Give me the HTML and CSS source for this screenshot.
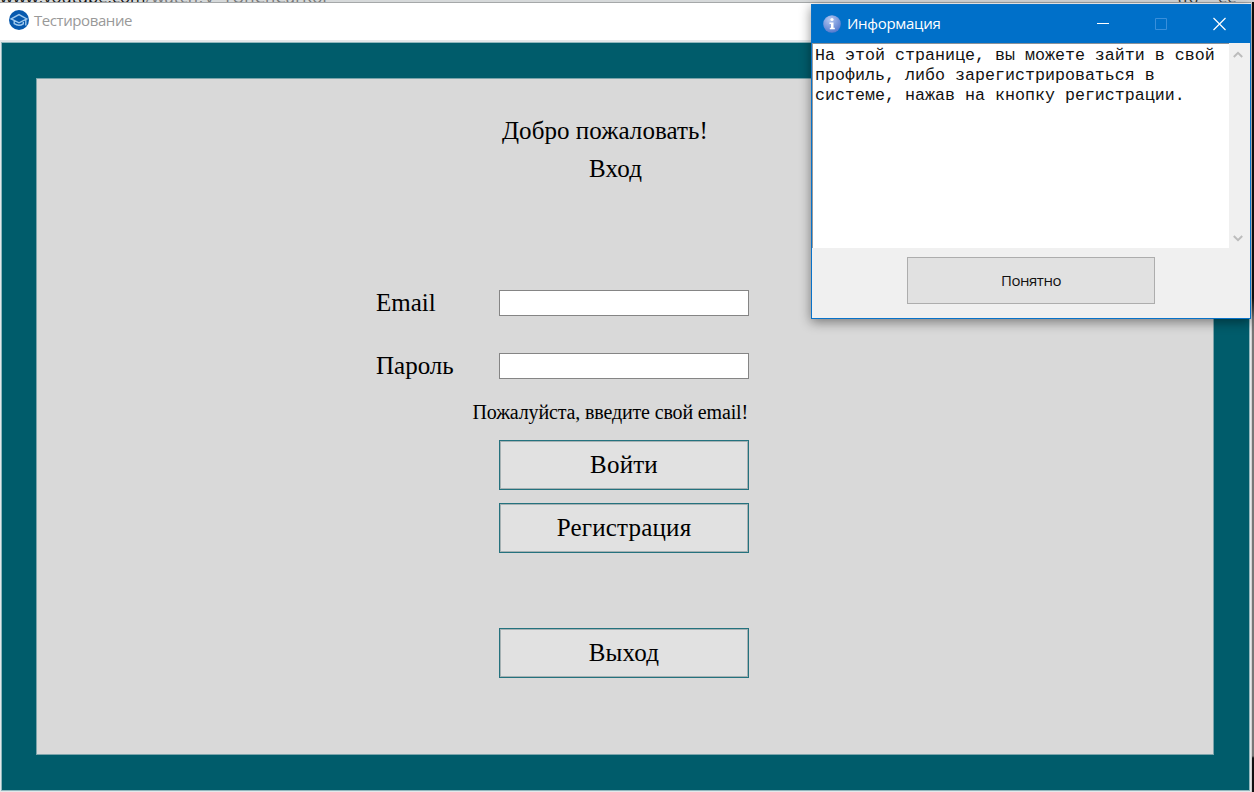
FILE: index.html
```html
<!DOCTYPE html>
<html lang="ru">
<head>
<meta charset="utf-8">
<title>Тестирование</title>
<link rel="stylesheet" href="styles.css">
</head>
<body>
<div class="desktop">
  <div class="address"><span><b>www.youtube.com</b>/watch?v=TUnCnCarKoI</span><span class="address-tools">(R)</span><span class="address-more">ee</span></div>
  <main class="window">
    <header class="titlebar">
      <svg class="app-icon" viewBox="0 0 20 20"><circle cx="10" cy="10" r="10" fill="#0759ae"/><path d="M2.2 8.9 10 4.6l7.8 4.3-7.8 3.9zM5.2 10.5v3.2q4.7 3 9.1.1v-3.2M16.8 9.2v6.3" fill="none" stroke="#9fc9ee" stroke-width="1.4"/></svg>
      <span class="app-title">Тестирование</span>
    </header>
    <div class="frame">
      <section class="panel">
        <h1 class="welcome"><span>Добро пожаловать!</span></h1>
        <h2 class="subtitle"><span>Вход</span></h2>
        <form class="form">
          <div class="field"><label for="email">Email</label><input id="email" type="text"></div>
          <div class="field"><label for="password">Пароль</label><input id="password" type="password"></div>
          <p class="message"><span>Пожалуйста, введите свой email!</span></p>
          <button class="action" type="button">Войти</button>
          <button class="action" type="button">Регистрация</button>
          <button class="action exit" type="button">Выход</button>
        </form>
      </section>
    </div>
  </main>
  <aside class="edge"></aside>
</div>
<div class="dialog" role="dialog">
  <header class="dialog-bar">
    <svg class="info-icon" viewBox="0 0 18 18"><defs><radialGradient id="ball" cx=".4" cy=".25" r=".8"><stop offset="0" stop-color="#b4c9f2"/><stop offset="1" stop-color="#4f75cc"/></radialGradient></defs><circle cx="9" cy="9" r="8.8" fill="url(#ball)"/><circle cx="9" cy="4.5" r="1.6" fill="#fff"/><path d="M6.5 7.5h4v5.3h1.3v1.5h-5v-1.5H8V9H6.5z" fill="#fff"/></svg>
    <span class="dialog-title">Информация</span>
    <svg class="controls" viewBox="0 0 130 14"><path d="M1 6.5h12" stroke="#fff"/><path d="M59.5 1.5h11v11h-11z" fill="none" stroke="#398fdb"/><path d="m117.5 1 12 12m0-12-12 12" stroke="#fff" stroke-width="1.2"/></svg>
  </header>
  <div class="dialog-text">
    <p class="info">На этой странице, вы можете зайти в свой<br>профиль, либо зарегистрироваться в<br>системе, нажав на кнопку регистрации.</p>
    <div class="scroll">
      <svg viewBox="0 0 10 8"><path d="m.8 6 4.2-4.2L9.2 6" fill="none" stroke="#bcbcbc" stroke-width="2"/></svg>
      <svg viewBox="0 0 10 8"><path d="M.8 2 5 6.2 9.2 2" fill="none" stroke="#bcbcbc" stroke-width="2"/></svg>
    </div>
  </div>
  <div class="dialog-footer"><button class="ok" type="button">Понятно</button></div>
</div>
</body>
</html>
```
FILE: styles.css
```css
* { box-sizing: border-box; }
body { margin: 0; width: 1254px; height: 792px; overflow: hidden; background: #e4e8ea; }
.desktop { display: grid; grid-template-columns: 1251px 3px; grid-template-rows: 2px 790px; }
.address {
  grid-column: 1 / 3; height: 2px; overflow: hidden; display: flex;
  background: #d6d9da; color: #777;
  font: 16.7px/18px "Open Sans", sans-serif;
}
.address span { margin-top: -12px; white-space: nowrap; width: 1178px; flex: none; }
.address b { font-weight: 400; color: #111; }
.address .address-tools { width: 40px; color: #333; }
.address .address-more { width: 30px; color: #333; }
.window { height: 790px; border-top: 1px solid #a5a8a9; }
.titlebar { height: 37px; display: flex; align-items: center; background: #fff; padding: 0 0 3px 9px; gap: 5px; }
.app-icon { width: 20px; height: 20px; }
.app-title { font: 15px/20px "Open Sans", "Noto Sans", sans-serif; color: #999; letter-spacing: -0.42px; }
.frame {
  margin: 2px 1px 0; height: 749px; padding: 35px 34px 34px 34px;
  background: #005c6b; border: 1px solid #91b7bd;
}
.panel {
  width: 1178px; height: 677px; background: #d9d9d9; border: 1px solid #7ba4ab;
  padding: 33px 0 0 339px; font-family: "Liberation Serif", serif; color: #000;
}
.welcome, .subtitle { margin: 0; font-size: 25px; font-weight: 400; line-height: 38px; letter-spacing: 0.05px; }
.welcome { padding-left: 126px; line-height: 38px; }
.subtitle { padding-left: 213px; letter-spacing: 0.2px; }
.form { width: 373px; margin-top: 102px; display: flex; flex-direction: column; align-items: flex-end; }
.field { width: 373px; height: 26px; display: flex; justify-content: space-between; align-items: center; margin-bottom: 37px; font-size: 25px; line-height: 26px; }
.field label { margin-top: -1px; }
.field input { width: 250px; height: 26px; padding: 2px; border: 1px solid #858585; background: #fff; border-radius: 0; outline: 0; }
.message { margin: -17px 1px 15px 0; font-size: 20px; line-height: 26px; letter-spacing: -0.15px; white-space: nowrap; }
.action {
  width: 250px; height: 50px; margin: 0 0 12.5px; padding: 0;
  font: 25px/28px "Liberation Serif", serif; letter-spacing: 0.2px; color: #000;
  background: #e1e1e1; border: 1px solid #24727e; border-radius: 0;
  box-shadow: inset 0 0 0 1px #a6b1b3;
}
.exit { margin-top: 62.5px; }
.edge { background: linear-gradient(90deg, #d0d0d0 0 1px, transparent 1px), linear-gradient(#111 0 296px, #777 316px 754px, #111 756px); }
.dialog {
  position: absolute; left: 811px; top: 4px; width: 440px; height: 315px;
  border: 1px solid #0872c9; background: #f0f0f0; box-shadow: 0 3px 11px rgba(0, 0, 0, .45);
  display: flex; flex-direction: column;
}
.dialog-bar { height: 38px; background: #0070c9; display: flex; align-items: center; padding: 0 24px 0 11px; flex: none; }
.info-icon { width: 18px; height: 18px; }
.dialog-title { margin: -2px 0 0 6px; font: 15px/20px "Open Sans", "Noto Sans", sans-serif; letter-spacing: -0.3px; color: #fff; }
.controls { width: 130px; height: 14px; margin-left: auto; }
.dialog-text { height: 205px; display: flex; flex: none; }
.info {
  width: 417px; margin: 0; padding: 2px 0 0 2px; background: #fff;
  border-top: 1px solid #8b9299; border-left: 1px solid #9a9a9a;
  font: 16.67px/20px "Liberation Mono", monospace; color: #111; white-space: nowrap;
}
.scroll { flex: 1; display: flex; flex-direction: column; justify-content: space-between; align-items: center; padding: 8px 3px 6px 0; }
.scroll svg { width: 10px; height: 8px; }
.dialog-footer { display: flex; padding: 9px 0 0 95px; }
.ok { width: 248px; height: 47px; padding: 0 0 2px; background: #e1e1e1; border: 1px solid #adadad; border-radius: 0; font: 15px/18px "Open Sans", "Noto Sans", sans-serif; letter-spacing: -0.45px; color: #111; }
```
